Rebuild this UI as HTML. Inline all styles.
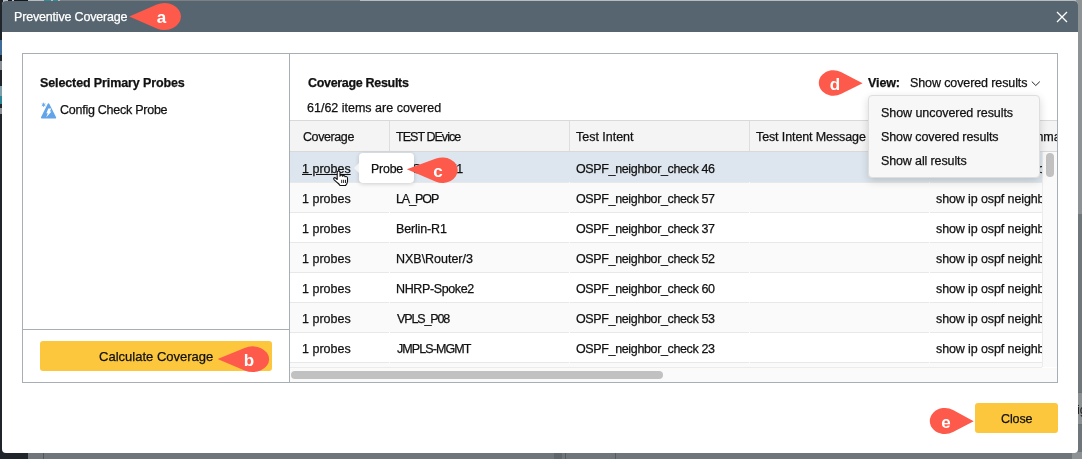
<!DOCTYPE html>
<html><head><meta charset="utf-8">
<style>
*{margin:0;padding:0;box-sizing:border-box}
html,body{width:1082px;height:459px;overflow:hidden;background:#6f767b;font-family:"Liberation Sans",sans-serif;font-size:12px;color:#1b1b1b}
.abs{position:absolute}
.t{position:absolute;white-space:nowrap;line-height:1;will-change:transform;-webkit-text-stroke:0.25px currentColor}
</style></head>
<body>
<div class="abs" style="left:0;top:0;width:1082px;height:3px;background:#b9bcbe"></div>
<div class="abs" style="left:60px;top:0;width:300px;height:3px;background:#7d8083"></div>
<div class="abs" style="left:8px;top:0;width:4px;height:2px;background:#15191d"></div>
<div class="abs" style="left:14px;top:0;width:14px;height:2px;background:#15191d"></div>
<div class="abs" style="left:44px;top:0;width:7px;height:2px;background:#2f8c94"></div>
<div class="abs" style="left:53px;top:0;width:5px;height:2px;background:#2f8c94"></div>
<div class="abs" style="left:0;top:0;width:3px;height:459px;background:#1f252b"></div>
<div class="abs" style="left:0;top:40px;width:3px;height:15px;background:#3f6c98"></div>
<div class="abs" style="left:0;top:61px;width:3px;height:9px;background:#8a9196"></div>
<div class="abs" style="left:0;top:86px;width:3px;height:10px;background:#7fa0ab"></div>
<div class="abs" style="left:0;top:96px;width:3px;height:8px;background:#2a8597"></div>
<div class="abs" style="left:0;top:108px;width:3px;height:6px;background:#8a9196"></div>
<div class="abs" style="left:0;top:452px;width:28px;height:7px;background:#1f252b"></div>
<div class="abs" style="left:1076px;top:0;width:6px;height:214px;background:#8d9295"></div>
<div class="abs" style="left:1076px;top:214px;width:6px;height:178px;background:#70777b"></div>
<div class="abs" style="left:1076px;top:392px;width:6px;height:33px;background:#8b9093;border-top:1px solid #6a7074;border-bottom:1px solid #6a7074"></div>
<div class="abs" style="left:1077px;top:405px;width:5px;height:16px;overflow:hidden"><div style="position:absolute;left:-0.5px;top:-1px;font-size:12.5px;line-height:1;color:#1a1a1a;white-space:nowrap;will-change:transform">ig</div></div>
<div class="abs" style="left:43px;top:452px;width:1px;height:7px;background:#50565b"></div>
<div class="abs" style="left:554px;top:452px;width:8px;height:7px;background:#60676c"></div>
<div class="abs" style="left:565px;top:452px;width:1px;height:7px;background:#565c61"></div>
<div class="abs" style="left:615px;top:452px;width:1px;height:7px;background:#565c61"></div>
<div class="abs" style="left:1072px;top:452px;width:10px;height:7px;background:#8c9194"></div>

<div class="abs" style="left:2px;top:1px;width:1076px;height:452px;background:#fff;border-radius:4px"></div>
<div class="abs" style="left:2px;top:1px;width:1076px;height:31px;background:#56656f;border-radius:4px 4px 0 0"></div>
<svg class="abs" style="left:1056px;top:11px" width="12" height="12" viewBox="0 0 12 12"><path d="M1 1L11 11M11 1L1 11" stroke="#fff" stroke-width="1.3"/></svg>

<div class="abs" style="left:22px;top:53px;width:1036px;height:330px;border:1px solid #a8afb4"></div>
<div class="abs" style="left:289px;top:53px;width:1px;height:330px;background:#a8afb4"></div>
<div class="abs" style="left:22px;top:329px;width:268px;height:1px;background:#a8afb4"></div>

<svg class="abs" style="left:36px;top:98px" width="30" height="24" viewBox="0 0 30 24">
  <path d="M12.5 6.4 L19.2 19.6 L5.9 19.6 Z" fill="#62a4ea" stroke="#62a4ea" stroke-width="2" stroke-linejoin="round"/>
  <path d="M12.3 10.4 L15.2 10.4 L13.9 13.6 L15.5 13.6 L10.3 19.3 L11.8 15.3 L10.4 15.3 Z" fill="#fff"/>
  <path d="M7.6 4.7 L7.6 8.9 M5.8 5.75 L9.4 7.85 M9.4 5.75 L5.8 7.85" stroke="#62a4ea" stroke-width="0.9"/>
</svg>

<div class="abs" style="left:40px;top:341px;width:232px;height:30px;background:#fdc73d;border-radius:3px"></div>

<svg class="abs" style="left:1031px;top:80px" width="10" height="7" viewBox="0 0 10 7"><path d="M0.8 1.6L4.8 5.5L8.8 1.6" fill="none" stroke="#1b1b1b" stroke-width="0.95"/></svg>

<div class="abs" style="left:290px;top:120px;width:767px;height:32px;background:#f4f4f4;border-top:1px solid #d9d9d9;border-bottom:1px solid #d9d9d9"></div>
<div class="abs" style="left:389px;top:121px;width:1px;height:30px;background:#dedede"></div>
<div class="abs" style="left:569px;top:121px;width:1px;height:30px;background:#dedede"></div>
<div class="abs" style="left:749px;top:121px;width:1px;height:30px;background:#dedede"></div>

<div class="abs" style="left:290px;top:152px;width:752px;height:30px;background:#dde6ee"></div>
<div class="abs" style="left:290px;top:182px;width:752px;height:30px;background:#fafafa"></div>
<div class="abs" style="left:290px;top:212px;width:752px;height:30px;background:#fff"></div>
<div class="abs" style="left:290px;top:242px;width:752px;height:30px;background:#fafafa"></div>
<div class="abs" style="left:290px;top:272px;width:752px;height:30px;background:#fff"></div>
<div class="abs" style="left:290px;top:302px;width:752px;height:30px;background:#fafafa"></div>
<div class="abs" style="left:290px;top:332px;width:752px;height:30px;background:#fff"></div>
<div class="abs" style="left:290px;top:362px;width:752px;height:15px;background:#fafafa"></div>
<div class="abs" style="left:290px;top:182px;width:99px;height:1px;background:#e8e8e8"></div>
<div class="abs" style="left:390px;top:182px;width:179px;height:1px;background:#e8e8e8"></div>
<div class="abs" style="left:570px;top:182px;width:179px;height:1px;background:#e8e8e8"></div>
<div class="abs" style="left:750px;top:182px;width:179px;height:1px;background:#e8e8e8"></div>
<div class="abs" style="left:930px;top:182px;width:112px;height:1px;background:#e8e8e8"></div>
<div class="abs" style="left:290px;top:212px;width:99px;height:1px;background:#e8e8e8"></div>
<div class="abs" style="left:390px;top:212px;width:179px;height:1px;background:#e8e8e8"></div>
<div class="abs" style="left:570px;top:212px;width:179px;height:1px;background:#e8e8e8"></div>
<div class="abs" style="left:750px;top:212px;width:179px;height:1px;background:#e8e8e8"></div>
<div class="abs" style="left:930px;top:212px;width:112px;height:1px;background:#e8e8e8"></div>
<div class="abs" style="left:290px;top:242px;width:99px;height:1px;background:#e8e8e8"></div>
<div class="abs" style="left:390px;top:242px;width:179px;height:1px;background:#e8e8e8"></div>
<div class="abs" style="left:570px;top:242px;width:179px;height:1px;background:#e8e8e8"></div>
<div class="abs" style="left:750px;top:242px;width:179px;height:1px;background:#e8e8e8"></div>
<div class="abs" style="left:930px;top:242px;width:112px;height:1px;background:#e8e8e8"></div>
<div class="abs" style="left:290px;top:272px;width:99px;height:1px;background:#e8e8e8"></div>
<div class="abs" style="left:390px;top:272px;width:179px;height:1px;background:#e8e8e8"></div>
<div class="abs" style="left:570px;top:272px;width:179px;height:1px;background:#e8e8e8"></div>
<div class="abs" style="left:750px;top:272px;width:179px;height:1px;background:#e8e8e8"></div>
<div class="abs" style="left:930px;top:272px;width:112px;height:1px;background:#e8e8e8"></div>
<div class="abs" style="left:290px;top:302px;width:99px;height:1px;background:#e8e8e8"></div>
<div class="abs" style="left:390px;top:302px;width:179px;height:1px;background:#e8e8e8"></div>
<div class="abs" style="left:570px;top:302px;width:179px;height:1px;background:#e8e8e8"></div>
<div class="abs" style="left:750px;top:302px;width:179px;height:1px;background:#e8e8e8"></div>
<div class="abs" style="left:930px;top:302px;width:112px;height:1px;background:#e8e8e8"></div>
<div class="abs" style="left:290px;top:332px;width:99px;height:1px;background:#e8e8e8"></div>
<div class="abs" style="left:390px;top:332px;width:179px;height:1px;background:#e8e8e8"></div>
<div class="abs" style="left:570px;top:332px;width:179px;height:1px;background:#e8e8e8"></div>
<div class="abs" style="left:750px;top:332px;width:179px;height:1px;background:#e8e8e8"></div>
<div class="abs" style="left:930px;top:332px;width:112px;height:1px;background:#e8e8e8"></div>
<div class="abs" style="left:290px;top:362px;width:99px;height:1px;background:#e8e8e8"></div>
<div class="abs" style="left:390px;top:362px;width:179px;height:1px;background:#e8e8e8"></div>
<div class="abs" style="left:570px;top:362px;width:179px;height:1px;background:#e8e8e8"></div>
<div class="abs" style="left:750px;top:362px;width:179px;height:1px;background:#e8e8e8"></div>
<div class="abs" style="left:930px;top:362px;width:112px;height:1px;background:#e8e8e8"></div>
<div class="abs" style="left:290px;top:367px;width:752px;height:1px;background:#ececec"></div>
<div class="t" style="left:14.00px;top:11.00px;font-size:12.5px;font-weight:400;color:#fff;letter-spacing:-0.178px;">Preventive Coverage</div>
<div class="t" style="left:40.00px;top:77.00px;font-size:12.5px;font-weight:700;color:#111;letter-spacing:-0.114px;">Selected Primary Probes</div>
<div class="t" style="left:60.00px;top:104.00px;font-size:12.5px;font-weight:400;color:#111;letter-spacing:-0.254px;">Config Check Probe</div>
<div class="t" style="left:99.00px;top:350.00px;font-size:13px;font-weight:400;color:#111;letter-spacing:0.009px;">Calculate Coverage</div>
<div class="t" style="left:308.00px;top:77.00px;font-size:12.5px;font-weight:700;color:#111;letter-spacing:-0.317px;">Coverage Results</div>
<div class="t" style="left:307.00px;top:102.00px;font-size:12.5px;font-weight:400;color:#111;letter-spacing:-0.000px;">61/62 items are covered</div>
<div class="t" style="left:868.00px;top:77.00px;font-size:12.5px;font-weight:700;color:#111;letter-spacing:-0.100px;">View:</div>
<div class="t" style="left:910.00px;top:77.00px;font-size:12.5px;font-weight:400;color:#111;letter-spacing:-0.106px;">Show covered results</div>
<div class="t" style="left:303.00px;top:131.00px;font-size:12.5px;font-weight:400;color:#111;letter-spacing:-0.404px;">Coverage</div>
<div class="t" style="left:396.00px;top:131.00px;font-size:12.5px;font-weight:400;color:#111;letter-spacing:-0.960px;">TEST DEvice</div>
<div class="t" style="left:576.00px;top:131.00px;font-size:12.5px;font-weight:400;color:#111;letter-spacing:-0.020px;">Test Intent</div>
<div class="t" style="left:756.00px;top:131.00px;font-size:12.5px;font-weight:400;color:#111;letter-spacing:-0.111px;">Test Intent Message</div>
<div class="abs" style="left:1040px;top:127.00px;width:17px;height:20.5px;overflow:hidden"><div class="t" style="left:-14.00px;top:4px;font-size:12.5px;font-weight:400;color:#111;letter-spacing:0.000px;">ommand</div></div>
<div class="t" style="left:302.00px;top:163.00px;font-size:12.5px;font-weight:400;color:#111;letter-spacing:0.000px;text-decoration:underline;">1 probes</div>
<div class="t" style="left:396.00px;top:163.00px;font-size:12.5px;font-weight:400;color:#111;letter-spacing:-0.725px;">BOS-EDGE1</div>
<div class="t" style="left:576.00px;top:163.00px;font-size:12.5px;font-weight:400;color:#111;letter-spacing:-0.360px;">OSPF_neighbor_check 46</div>
<div class="abs" style="left:936px;top:159.00px;width:106px;height:20.5px;overflow:hidden"><div class="t" style="left:0.00px;top:4px;font-size:12.5px;font-weight:400;color:#111;letter-spacing:-0.109px;">show ip ospf neighbor</div></div>
<div class="t" style="left:302.00px;top:193.00px;font-size:12.5px;font-weight:400;color:#111;letter-spacing:0.000px;">1 probes</div>
<div class="t" style="left:396.00px;top:193.00px;font-size:12.5px;font-weight:400;color:#111;letter-spacing:-1.080px;">LA_POP</div>
<div class="t" style="left:576.00px;top:193.00px;font-size:12.5px;font-weight:400;color:#111;letter-spacing:-0.360px;">OSPF_neighbor_check 57</div>
<div class="abs" style="left:936px;top:189.00px;width:106px;height:20.5px;overflow:hidden"><div class="t" style="left:0.00px;top:4px;font-size:12.5px;font-weight:400;color:#111;letter-spacing:-0.109px;">show ip ospf neighbor</div></div>
<div class="t" style="left:302.00px;top:223.00px;font-size:12.5px;font-weight:400;color:#111;letter-spacing:0.000px;">1 probes</div>
<div class="t" style="left:396.00px;top:223.00px;font-size:12.5px;font-weight:400;color:#111;letter-spacing:-0.157px;">Berlin-R1</div>
<div class="t" style="left:576.00px;top:223.00px;font-size:12.5px;font-weight:400;color:#111;letter-spacing:-0.360px;">OSPF_neighbor_check 37</div>
<div class="abs" style="left:936px;top:219.00px;width:106px;height:20.5px;overflow:hidden"><div class="t" style="left:0.00px;top:4px;font-size:12.5px;font-weight:400;color:#111;letter-spacing:-0.109px;">show ip ospf neighbor</div></div>
<div class="t" style="left:302.00px;top:253.00px;font-size:12.5px;font-weight:400;color:#111;letter-spacing:0.000px;">1 probes</div>
<div class="t" style="left:396.00px;top:253.00px;font-size:12.5px;font-weight:400;color:#111;letter-spacing:-0.021px;">NXB\Router/3</div>
<div class="t" style="left:576.00px;top:253.00px;font-size:12.5px;font-weight:400;color:#111;letter-spacing:-0.360px;">OSPF_neighbor_check 52</div>
<div class="abs" style="left:936px;top:249.00px;width:106px;height:20.5px;overflow:hidden"><div class="t" style="left:0.00px;top:4px;font-size:12.5px;font-weight:400;color:#111;letter-spacing:-0.109px;">show ip ospf neighbor</div></div>
<div class="t" style="left:302.00px;top:283.00px;font-size:12.5px;font-weight:400;color:#111;letter-spacing:0.000px;">1 probes</div>
<div class="t" style="left:396.00px;top:283.00px;font-size:12.5px;font-weight:400;color:#111;letter-spacing:-0.380px;">NHRP-Spoke2</div>
<div class="t" style="left:576.00px;top:283.00px;font-size:12.5px;font-weight:400;color:#111;letter-spacing:-0.360px;">OSPF_neighbor_check 60</div>
<div class="abs" style="left:936px;top:279.00px;width:106px;height:20.5px;overflow:hidden"><div class="t" style="left:0.00px;top:4px;font-size:12.5px;font-weight:400;color:#111;letter-spacing:-0.109px;">show ip ospf neighbor</div></div>
<div class="t" style="left:302.00px;top:313.00px;font-size:12.5px;font-weight:400;color:#111;letter-spacing:0.000px;">1 probes</div>
<div class="t" style="left:397.00px;top:313.00px;font-size:12.5px;font-weight:400;color:#111;letter-spacing:-1.143px;">VPLS_P08</div>
<div class="t" style="left:576.00px;top:313.00px;font-size:12.5px;font-weight:400;color:#111;letter-spacing:-0.360px;">OSPF_neighbor_check 53</div>
<div class="abs" style="left:936px;top:309.00px;width:106px;height:20.5px;overflow:hidden"><div class="t" style="left:0.00px;top:4px;font-size:12.5px;font-weight:400;color:#111;letter-spacing:-0.109px;">show ip ospf neighbor</div></div>
<div class="t" style="left:302.00px;top:343.00px;font-size:12.5px;font-weight:400;color:#111;letter-spacing:0.000px;">1 probes</div>
<div class="t" style="left:397.00px;top:343.00px;font-size:12.5px;font-weight:400;color:#111;letter-spacing:-0.914px;">JMPLS-MGMT</div>
<div class="t" style="left:576.00px;top:343.00px;font-size:12.5px;font-weight:400;color:#111;letter-spacing:-0.360px;">OSPF_neighbor_check 23</div>
<div class="abs" style="left:936px;top:339.00px;width:106px;height:20.5px;overflow:hidden"><div class="t" style="left:0.00px;top:4px;font-size:12.5px;font-weight:400;color:#111;letter-spacing:-0.109px;">show ip ospf neighbor</div></div>

<div class="abs" style="left:290px;top:368px;width:767px;height:14px;background:#fafafa"></div>
<div class="abs" style="left:291px;top:371px;width:372px;height:8px;background:#c1c1c1;border-radius:4px"></div>
<div class="abs" style="left:1042px;top:152px;width:15px;height:215px;background:#fafafa;border-left:1px solid #ececec"></div>
<div class="abs" style="left:1046px;top:153px;width:8px;height:24px;background:#c1c1c1;border-radius:4px"></div>

<div class="abs" style="left:868px;top:95px;width:172px;height:83px;background:#f7f7f7;border:1px solid #dedede;border-radius:4px;box-shadow:0 3px 8px rgba(0,0,0,0.16)"></div>
<div class="t" style="left:881.00px;top:107.00px;font-size:12.5px;font-weight:400;color:#111;letter-spacing:-0.062px;">Show uncovered results</div>
<div class="t" style="left:881.00px;top:131.00px;font-size:12.5px;font-weight:400;color:#111;letter-spacing:-0.101px;">Show covered results</div>
<div class="t" style="left:881.00px;top:155.00px;font-size:12.5px;font-weight:400;color:#111;letter-spacing:-0.126px;">Show all results</div>

<svg class="abs" style="left:332px;top:169px" width="18" height="19" viewBox="0 0 18 19">
<path d="M5.2 3.2 Q5.2 2 6.6 2 Q8 2 8 3.2 L8 7.2 Q8.2 6 9.3 6 Q10.5 6 10.5 7.2 Q10.8 6.5 11.8 6.5 Q13 6.6 13 7.8 Q13.4 7.4 14.2 7.5 Q15.5 7.7 15.5 9 L15.5 12.5 Q15.3 14.8 13.5 16.5 L8 16.5 Q7 15 5.5 13.8 L2.2 10.8 Q1.2 9.8 2 9 Q2.8 8.3 3.8 9.2 L5.2 10.5 Z" fill="#fff" stroke="#111" stroke-width="1.1" stroke-linejoin="round"/>
<path d="M9.7 10.8V14M11.6 10.8V14M13.5 10.8V14" stroke="#111" stroke-width="0.9"/>
</svg>
<div class="abs" style="left:359px;top:153px;width:55px;height:30px;background:#fff;border-radius:4px;box-shadow:0 1px 4px rgba(0,0,0,0.18)"></div>
<div class="abs" style="left:354px;top:163px;width:0;height:0;border-top:5px solid transparent;border-bottom:5px solid transparent;border-right:5px solid #f4f4f4"></div>
<div class="t" style="left:371.00px;top:163.00px;font-size:12.3px;font-weight:400;color:#111;letter-spacing:-0.150px;">Probe</div>

<div class="abs" style="left:975px;top:403px;width:83px;height:30px;background:#fdc73d;border-radius:3px"></div>
<div class="t" style="left:1001.00px;top:413.00px;font-size:12.5px;font-weight:400;color:#111;letter-spacing:-0.100px;">Close</div>

<svg class="abs" style="left:0;top:0" width="1082" height="459">
<path d="M129.20 16.40 L156.79 4.61 A16.50 13.45 0 1 1 156.79 28.39 Z" fill="#fd5a4b"/>
<text x="161.4" y="22.9" fill="#fff" font-family="Liberation Sans" font-weight="bold" font-size="17" text-anchor="middle">a</text>
<path d="M217.60 359.00 L244.60 347.90 A16.60 12.85 0 1 1 244.60 370.50 Z" fill="#fd5a4b"/>
<text x="249" y="366.2" fill="#fff" font-family="Liberation Sans" font-weight="bold" font-size="17" text-anchor="middle">b</text>
<path d="M406.80 169.30 L436.03 158.62 A15.20 12.80 0 1 1 436.03 181.78 Z" fill="#fd5a4b"/>
<text x="438" y="177.2" fill="#fff" font-family="Liberation Sans" font-weight="bold" font-size="17" text-anchor="middle">c</text>
<path d="M862.60 83.20 L840.93 71.91 A14.70 12.85 0 1 0 840.93 94.09 Z" fill="#fd5a4b"/>
<text x="835" y="90" fill="#fff" font-family="Liberation Sans" font-weight="bold" font-size="17" text-anchor="middle">d</text>
<path d="M973.70 421.30 L953.05 409.93 A15.20 13.05 0 1 0 953.05 432.07 Z" fill="#fd5a4b"/>
<text x="946" y="428" fill="#fff" font-family="Liberation Sans" font-weight="bold" font-size="17" text-anchor="middle">e</text>
</svg>
</body></html>
